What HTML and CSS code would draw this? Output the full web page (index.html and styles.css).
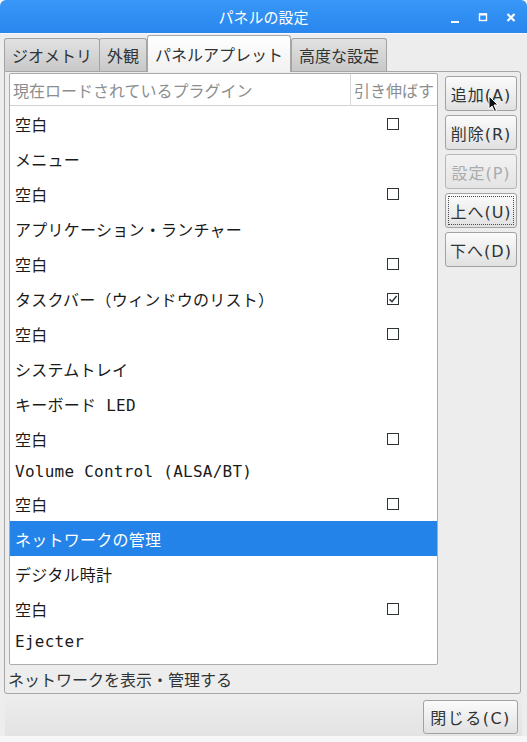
FILE: index.html
```html
<!DOCTYPE html>
<html lang="ja">

<head>
    <meta charset="UTF-8">
    <meta name="viewport" content="width=device-width, initial-scale=1.0">
    <title>パネルの設定</title>
    <link rel="stylesheet" href="styles.css">
</head>

<body>
    <div class="window">
        <div class="titlebar">
            <div></div>
            <div class="title">パネルの設定</div>
            <div class="controls">
                <span class="ctl">
                    <svg width="16" height="16" viewBox="0 0 16 16"><rect x="4" y="12" width="8" height="2" fill="#fff"/></svg>
                </span>
                <span class="ctl">
                    <svg width="16" height="16" viewBox="0 0 16 16"><rect x="4.5" y="5" width="7" height="6.5" fill="none" stroke="#fff" stroke-width="1.4"/><rect x="4" y="4.5" width="8" height="2" fill="#fff"/></svg>
                </span>
                <span class="ctl">
                    <svg width="16" height="16" viewBox="0 0 16 16"><path d="M4.5 5 L11.5 12 M11.5 5 L4.5 12" stroke="#fff" stroke-width="2.2"/></svg>
                </span>
            </div>
        </div>

        <div class="content">
            <div class="tabs">
                <div class="tab">ジオメトリ</div>
                <div class="tab">外観</div>
                <div class="tab active">パネルアプレット</div>
                <div class="tab">高度な設定</div>
            </div>

            <div class="page">
                <div class="page-main">
                    <div class="list">
                        <div class="list-head">
                            <div class="head-name">現在ロードされているプラグイン</div>
                            <div class="head-stretch">引き伸ばす</div>
                        </div>
                        <div class="row"><span class="name">空白</span><span class="cell"><span class="check"></span></span></div>
                        <div class="row"><span class="name">メニュー</span><span class="cell"></span></div>
                        <div class="row"><span class="name">空白</span><span class="cell"><span class="check"></span></span></div>
                        <div class="row"><span class="name">アプリケーション・ランチャー</span><span class="cell"></span></div>
                        <div class="row"><span class="name">空白</span><span class="cell"><span class="check"></span></span></div>
                        <div class="row"><span class="name">タスクバー（ウィンドウのリスト）</span><span class="cell"><span class="check"><svg width="10" height="10" viewBox="0 0 10 10"><path d="M1.5 5.2 L4 7.8 L8.6 2" fill="none" stroke="#2e3436" stroke-width="1.4"/></svg></span></span></div>
                        <div class="row"><span class="name">空白</span><span class="cell"><span class="check"></span></span></div>
                        <div class="row"><span class="name">システムトレイ</span><span class="cell"></span></div>
                        <div class="row"><span class="name">キーボード LED</span><span class="cell"></span></div>
                        <div class="row"><span class="name">空白</span><span class="cell"><span class="check"></span></span></div>
                        <div class="row mono"><span class="name">Volume Control (ALSA/BT)</span><span class="cell"></span></div>
                        <div class="row"><span class="name">空白</span><span class="cell"><span class="check"></span></span></div>
                        <div class="row selected"><span class="name">ネットワークの管理</span><span class="cell"></span></div>
                        <div class="row"><span class="name">デジタル時計</span><span class="cell"></span></div>
                        <div class="row"><span class="name">空白</span><span class="cell"><span class="check"></span></span></div>
                        <div class="row mono"><span class="name">Ejecter</span><span class="cell"></span></div>
                    </div>

                    <div class="side-buttons">
                        <button class="btn">追加(A)</button>
                        <button class="btn">削除(R)</button>
                        <button class="btn" disabled>設定(P)</button>
                        <button class="btn focused">上へ(U)</button>
                        <button class="btn">下へ(D)</button>
                    </div>
                </div>
                <div class="status">ネットワークを表示・管理する</div>
            </div>

            <div class="actions">
                <button class="btn close">閉じる(C)</button>
            </div>
        </div>

        <!-- mouse pointer over the add button -->
        <svg class="cursor" width="12" height="18" viewBox="0 0 12 18">
            <path d="M1 1 L1 14 L4 11 L6.5 16.5 L8.5 15.5 L6 10 L10 10 Z" fill="#111" stroke="#fff" stroke-width="1"/>
        </svg>
    </div>
</body>

</html>
```

FILE: styles.css
```css
body {
    margin: 0;
    padding: 0;
    background-color: #f7f7f7;
    font-family: "DejaVu Sans", "Noto Sans CJK JP", sans-serif;
    font-size: 16px;
    color: #2e3436;
}

.window {
    position: relative;
    width: 527px;
    height: 742px;
    overflow: hidden;
}

.titlebar {
    height: 33px;
    display: grid;
    grid-template-columns: 1fr auto 1fr;
    align-items: center;
    background: linear-gradient(#3897f7, #2886ee);
    border-radius: 6px 6px 0 0;
    color: #fff;
}

.title {
    font-size: 15px;
    font-family: "Noto Sans CJK JP", sans-serif;
}

.controls {
    display: flex;
    justify-content: flex-end;
    gap: 12px;
    padding-right: 8px;
}

.ctl {
    width: 16px;
    height: 16px;
    display: flex;
}

.content {
    background-color: #ededed;
    height: 702px;
    border-top: 1px solid #f8f8f8;
}

.tabs {
    display: flex;
    align-items: flex-end;
    height: 35px;
    margin-top: 2px;
    padding-left: 4px;
}

.tab {
    height: 32px;
    padding: 0 7px;
    display: flex;
    align-items: center;
    font-family: "Noto Sans CJK JP", sans-serif;
    color: #2e3436;
    background: linear-gradient(#e2e2e2, #c8c8c8);
    border: 1px solid #a3a3a3;
    border-bottom: none;
    border-radius: 3px 3px 0 0;
}

.tab + .tab {
    margin-left: -1px;
}

.tab.active {
    position: relative;
    z-index: 1;
    height: 36px;
    margin-left: 0;
    margin-bottom: -1px;
    background: linear-gradient(#ffffff, #f1f1f1);
    border-color: #a8a8a8;
}

.tab.active + .tab {
    margin-left: 0;
}

.page {
    margin: 0 6px 0 4px;
    height: 620px;
    padding: 1px 2px 0 4px;
    border: 1px solid #a6a6a6;
    border-radius: 0 3px 3px 3px;
    background-color: #ededed;
}

.page-main {
    display: flex;
    gap: 7px;
    height: 592px;
}

.list {
    width: 427px;
    height: 590px;
    border: 1px solid #ababab;
    border-radius: 2px;
    background-color: #fff;
    font-family: "DejaVu Sans Mono", "Noto Sans CJK JP", monospace;
    letter-spacing: 0.25px;
    color: #1a1a1a;
}

.list-head {
    display: grid;
    grid-template-columns: 341px 1fr;
    height: 31px;
    border-bottom: 1px solid #d2d2d2;
    color: #8b8e8f;
    font-family: "Noto Sans CJK JP", sans-serif;
    letter-spacing: 0;
}

.head-name {
    border-right: 1px solid #d6d6d6;
    padding-left: 3px;
    display: flex;
    align-items: center;
}

.head-stretch {
    padding-left: 3px;
    display: flex;
    align-items: center;
}

.row {
    display: grid;
    grid-template-columns: 341px 1fr;
    height: 35px;
    align-items: center;
    padding-top: 1px;
    box-sizing: border-box;
}

.row.mono {
    height: 30px;
}

.row .name {
    padding-left: 5px;
    white-space: nowrap;
}

.row.selected {
    background-color: #2383e9;
    color: #fff;
}

.cell {
    display: flex;
    justify-content: center;
    padding-right: 2px;
}

.check {
    width: 10px;
    height: 10px;
    border: 1px solid #2e3436;
    background-color: #fff;
    display: flex;
    align-items: center;
    justify-content: center;
}

.side-buttons {
    display: flex;
    flex-direction: column;
    gap: 4px;
    margin-top: 3px;
}

.btn {
    width: 72px;
    height: 35px;
    padding: 0;
    font-family: "DejaVu Sans", "Noto Sans CJK JP", sans-serif;
    font-size: 16px;
    letter-spacing: 1px;
    color: #2e3436;
    background: linear-gradient(#fbfbfb, #e1e1e1);
    border: 1px solid #a2a2a2;
    border-radius: 3px;
}

.btn:disabled {
    color: #a9acad;
    background: linear-gradient(#f2f2f2, #e4e4e4);
    border-color: #b7b7b7;
}

.btn.focused {
    outline: 1px dotted #4a4a4a;
    outline-offset: -4px;
}

.status {
    height: 27px;
    display: flex;
    align-items: center;
    margin-left: -1px;
    font-family: "Noto Sans CJK JP", sans-serif;
    color: #2e3436;
}

.actions {
    display: flex;
    justify-content: flex-end;
    margin: 0 5px 0 5px;
    height: 42px;
    padding: 6px 4px 0 0;
    box-sizing: border-box;
    background: linear-gradient(#ededed, #e3e3e3);
}

.btn.close {
    width: 95px;
    height: 34px;
    letter-spacing: 1.5px;
}

.cursor {
    position: absolute;
    left: 488px;
    top: 95px;
}
```
